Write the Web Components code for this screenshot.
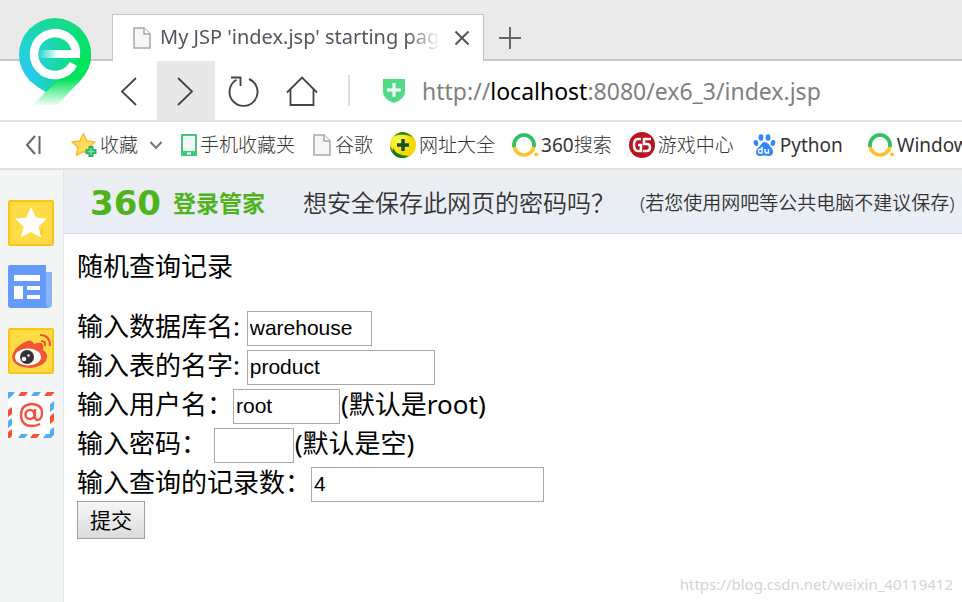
<!DOCTYPE html>
<html lang="zh-CN">
<head>
<meta charset="utf-8">
<meta name="viewport" content="width=device-width, initial-scale=1">
<title>My JSP 'index.jsp' starting page</title>
<style>
    body {
        margin: 0;
        background: #fff;
        font-family: "Noto Sans", "Noto Sans CJK SC", sans-serif;
    }
</style>
</head>
<body>
<browser-window></browser-window>

<script>
// inline svg icons, looked up by name
const icons = {
    file: `<svg width="20" height="22" viewBox="0 0 20 22" fill="#f6f6f6" stroke="#a8a8a8" stroke-width="1.500">
        <path d="M2 1h10l6 6v14H2z"/><path d="M12 1v6h6" fill="#fff"/></svg>`,
    close: `<svg width="16" height="16" viewBox="0 0 16 16" stroke="#555" stroke-width="2"><path d="M1.500 1.500l13 13M14.500 1.500l-13 13"/></svg>`,
    plus: `<svg width="22" height="22" viewBox="0 0 22 22" stroke="#666" stroke-width="2"><path d="M11 0v22M0 11h22"/></svg>`,
    back: `<svg width="30" height="30" viewBox="0 0 30 30" fill="none" stroke="#444" stroke-width="1.800"><path d="M23 2L9 15.500 23 29"/></svg>`,
    forward: `<svg width="30" height="30" viewBox="0 0 30 30" fill="none" stroke="#444" stroke-width="1.800"><path d="M7 2l14 13.500L7 29"/></svg>`,
    reload: `<svg width="32" height="32" viewBox="0 0 32 32" fill="none" stroke="#444" stroke-width="1.900">
        <path d="M21 4a14 14 0 1 1-12.500 .8"/><path d="M3 2.500h9.500v8.500"/></svg>`,
    home: `<svg width="32" height="32" viewBox="0 0 32 32" fill="none" stroke="#444" stroke-width="1.800">
        <path d="M1 17.500L16 2.500l15 15"/><path d="M4.500 14.500v15.500h23V14.500"/></svg>`,
    shield: `<svg width="24" height="26" viewBox="0 0 24 26"><path d="M1 1h22v13q0 7-11 11Q1 21 1 14z" fill="#50dc85"/>
        <path d="M12 5v14M5 12h14" stroke="#fff" stroke-width="3"/></svg>`,
    collapse: `<svg width="16" height="20" viewBox="0 0 16 20" fill="none" stroke="#666" stroke-width="2"><path d="M10 1L2 10l8 9M14.500 1v18"/></svg>`,
    star: `<svg width="26" height="26" viewBox="0 0 26 26">
        <path d="M12.500 1.500l3.400 7.400 8 1-6 5.500 1.600 8-7-3.900-7.100 3.900 1.600-8-6-5.500 8.100-1z" fill="#ffdc5c" stroke="#f8bd3c" stroke-width="1.500" stroke-linejoin="round"/>
        <path d="M20 14v11M14.500 19.500h11" stroke="#28b463" stroke-width="5"/>
        <path d="M20 16v7M16.500 19.500h7" stroke="#7be0a3" stroke-width="1.500"/></svg>`,
    chevron: `<svg width="14" height="10" viewBox="0 0 14 10" fill="none" stroke="#777" stroke-width="2"><path d="M1.500 2L7 8l5.500-6"/></svg>`,
    phone: `<svg width="16" height="22" viewBox="0 0 16 22"><rect width="16" height="22" rx="1" fill="#3fc877"/>
        <path d="M2 2h12v15H2z" fill="#f3faf6"/><path d="M6 19.500h4" stroke="#fff" stroke-width="2"/></svg>`,
    guide: `<svg width="26" height="26" viewBox="0 0 26 26"><defs><radialGradient id="y" cx=".35" cy=".35"><stop stop-color="#ffff58"/><stop offset="1" stop-color="#f5d800"/></radialGradient></defs>
        <circle cx="13" cy="13" r="13" fill="url(#y)"/>
        <path d="M4 4Q13-4 23 5q-9-4-19-1zM0 14q4 9 19 10-8 5-15-1-4-4-4-9z" fill="#35901b"/>
        <path d="M9 1q10 0 15 8Q20 3 13 0zM3 16q4 8 14 9-9 2-14-4z" fill="#157718"/>
        <path d="M13 7v12M7 13h12" stroke="#165018" stroke-width="3.500"/></svg>`,
    ring: `<svg width="26" height="26" viewBox="0 0 26 26" fill="none" stroke-width="3.600">
        <circle cx="12" cy="13" r="10" stroke="#fdc12c"/><path d="M2.200 15a10 10 0 1 1 19.600 0" stroke="#24c46a"/>
        <circle cx="24" cy="22.500" r="2" fill="#fdc12c"/></svg>`,
    game: `<svg width="26" height="26" viewBox="0 0 26 26"><circle cx="13" cy="13" r="13" fill="#bd1320"/>
        <path d="M12 7H9q-4 0-4 6t4 6h3v-6H9M22 7h-7v5h3q3 0 3 3.500T17.500 19H14" fill="none" stroke="#fff" stroke-width="2.500"/></svg>`,
    paw: `<svg width="26" height="26" viewBox="0 0 26 26" fill="#3385ff">
        <ellipse cx="5" cy="11" rx="2.300" ry="3" transform="rotate(-15 5 11)"/><ellipse cx="10" cy="5.500" rx="2.400" ry="3.300"/>
        <ellipse cx="17" cy="5.500" rx="2.400" ry="3.300"/><ellipse cx="22" cy="11" rx="2.300" ry="3" transform="rotate(15 22 11)"/>
        <path d="M13.500 10q3 0 5.500 4 4 4 3 7-1 3-4 3-4-1-9 0-4 0-4-4 0-3 4-6 2-4 4.500-4z"/>
        <path d="M11 15v6H9q-1.500 0-1.500-2T9 17.200h2M14 17v2.500q0 1.500 2 1.500h1.500v-4" fill="none" stroke="#fff" stroke-width="1.400"/></svg>`,
    favorites: `<svg width="46" height="46" viewBox="0 0 46 46"><rect x="1" y="1" width="44" height="44" rx="1" fill="#ffdb45" stroke="#fdc414" stroke-width="2"/>
        <path d="M31 36l4-2-1-7 3-8z" fill="#f5c52c"/>
        <path d="M23 8l4.500 10 10.500 1-8 7.500 2.500 10L23 31.500 13.500 36.500l2.500-10L8 19l10.500-1z" fill="#fff" stroke="#fff" stroke-linejoin="round"/></svg>`,
    news: `<svg width="46" height="46" viewBox="0 0 46 46"><path d="M34 8h10v32q0 4-4 4H30z" fill="#86b5fb"/>
        <path d="M0 3q0-2 2-2h36v39q0 4 3 4H3q-3 0-3-3z" fill="#659afa"/>
        <path d="M6 11h26v6H6zM6 22h9v13H6zM19 22h13v4H19zM19 31h13v4H19z" fill="#fff"/></svg>`,
    weibo: `<svg width="46" height="46" viewBox="0 0 46 46"><rect x="1" y="1" width="44" height="44" rx="1" fill="#ffdc43" stroke="#fdc414" stroke-width="2"/>
        <path d="M17 14q6-4 9 2 8-3 9 1 1 2 0 5 4 2 4 6 0 10-17 12Q5 39 4 29q1-9 13-15z" fill="#f05537"/>
        <ellipse cx="20" cy="29" rx="13" ry="8.500" fill="#fff"/><circle cx="19" cy="29" r="7" fill="#333"/>
        <circle cx="16" cy="31" r="2.300" fill="#fff"/><circle cx="20.500" cy="27.500" r="1.200" fill="#fff"/>
        <path d="M33 13q5 0 4 5M32 7q10 0 10 11" fill="none" stroke="#f05537" stroke-width="2.200"/></svg>`,
    mail: `<svg width="46" height="46" viewBox="0 0 46 46"><rect width="46" height="46" fill="#fff"/>
        <g fill="#f4523c"><path d="M13 0h7l-3 4h-7zM39 0h7v1l-3 3h-7zM0 18l4-3v7l-4 3zM0 40l4-3v7l-2 2H0zM25 42h7l-3 4h-7zM42 24l4-3v8l-4 3z"/></g>
        <g fill="#54aef5"><path d="M0 0h7L4 4 0 7zM26 0h7l-3 4h-7zM0 29l4-3v7l-4 3zM13 42h7l-3 4h-7zM38 42h4v-4l4-3v8l-3 3h-8zM42 12l4-3v8l-4 3z"/></g>
        <circle cx="22" cy="22.500" r="4.500" fill="none" stroke="#f4523c" stroke-width="2.500"/>
        <path d="M27 17v8q0 3 3 3 4-1 4-7 0-9-11-9-10 1-10 11 0 11 11 11 4 0 8-2" fill="none" stroke="#f4523c" stroke-width="2.300"/></svg>`,
    logo: `<svg width="76" height="92" viewBox="0 0 76 92">
        <defs>
            <linearGradient id="drop" x1=".15" y1=".95" x2=".6" y2="0"><stop stop-color="#2bc6ff"/><stop offset=".45" stop-color="#22d3d0"/><stop offset="1" stop-color="#14dc88"/></linearGradient>
            <linearGradient id="side" gradientUnits="userSpaceOnUse" x1="30" y1="30" x2="66" y2="48"><stop stop-color="#02e45b" stop-opacity="0"/><stop offset="1" stop-color="#02e45b"/></linearGradient>
            <linearGradient id="tail" gradientUnits="userSpaceOnUse" x1="0" y1="62" x2="0" y2="90"><stop stop-color="#02e45b"/><stop offset="1" stop-color="#02e45b" stop-opacity="0"/></linearGradient>
            <linearGradient id="bar" gradientUnits="userSpaceOnUse" x1="20" y1="0" x2="40" y2="0"><stop stop-color="#fff" stop-opacity="0"/><stop offset="1" stop-color="#fff"/></linearGradient>
        </defs>
        <path d="M37 1a36.500 36.500 0 0 1 36 37q0 14-11 25H40L28 75Q19 70 12 64 1 52 1 38A36.500 36.500 0 0 1 37 1z" fill="url(#drop)"/>
        <path d="M37 1a36.500 36.500 0 0 1 36 37q0 14-11 25H40L28 75Q19 70 12 64 1 52 1 38A36.500 36.500 0 0 1 37 1z" fill="url(#side)"/>
        <path d="M62 40q11-9 11-2 0 14-11 26L39 88H15L40 62z" fill="url(#tail)"/>
        <path d="M55.500 47A21 21 0 1 1 58 37" fill="none" stroke="#fff" stroke-width="8.500"/>
        <path d="M20 33h42v8H20z" fill="url(#bar)"/></svg>`
};

// shared helper: open shadow root filled from a template
function attach(element, html) {
    const template = document.createElement('template');
    template.innerHTML = html;
    element.attachShadow({ mode: 'open' });
    element.shadowRoot.appendChild(template.content.cloneNode(true));
}

// <ui-icon name="...">
class UiIcon extends HTMLElement {
    constructor() {
        super();
        attach(this, `
            <style>
                :host { display: inline-flex; flex: none; }
                svg { display: block; }
            </style>
            ${icons[this.getAttribute('name')]}`);
    }
}
customElements.define('ui-icon', UiIcon);

// <icon-button label="..."> square toolbar button
class IconButton extends HTMLElement {
    constructor() {
        super();
        attach(this, `
            <style>
                :host { display: flex; flex: none; }
                button {
                    display: flex;
                    align-items: center;
                    justify-content: center;
                    width: var(--button-width, 58px);
                    border: 0;
                    padding: 0;
                    background: none;
                    cursor: pointer;
                }
                :host([active]) button, button:hover { background: #e8e8e8; }
            </style>
            <button type="button"><slot></slot></button>`);
        this.shadowRoot.querySelector('button').setAttribute('aria-label', this.getAttribute('label'));
    }
}
customElements.define('icon-button', IconButton);

// tab strip along the top
class TabStrip extends HTMLElement {
    constructor() {
        super();
        attach(this, `
            <style>
                :host {
                    display: flex;
                    align-items: flex-end;
                    height: 61px;
                    box-sizing: border-box;
                    padding-left: 112px;
                    background: linear-gradient(#c6c6c6, #c6c6c6) bottom / 100% 2px no-repeat #eaeaea;
                    --button-width: 28px;
                }
                .tab {
                    display: flex;
                    align-items: center;
                    gap: 8px;
                    width: 372px;
                    height: 47px;
                    box-sizing: border-box;
                    border: 1px solid #c6c6c6;
                    border-bottom: 0;
                    padding: 0 7px 0 19px;
                    background: #fff;
                }
                .title {
                    flex: 1;
                    overflow: hidden;
                    white-space: nowrap;
                    color: #555560;
                    font-size: 20px;
                    line-height: 28px;
                    padding-bottom: 2px;
                    -webkit-mask-image: linear-gradient(to right, #000 88%, transparent);
                    mask-image: linear-gradient(to right, #000 88%, transparent);
                }
                .new { height: 47px; padding-left: 12px; }
            </style>
            <div class="tab">
                <ui-icon name="file"></ui-icon>
                <span class="title">My JSP 'index.jsp' starting page</span>
                <icon-button label="关闭"><ui-icon name="close"></ui-icon></icon-button>
            </div>
            <icon-button class="new" label="新标签页"><ui-icon name="plus"></ui-icon></icon-button>`);
    }
}
customElements.define('tab-strip', TabStrip);

// navigation buttons and address
class AddressBar extends HTMLElement {
    constructor() {
        super();
        attach(this, `
            <style>
                :host {
                    display: flex;
                    height: 59px;
                    padding-left: 99px;
                    border-bottom: 2px solid #e0e0e0;
                    background: #fff;
                }
                .address {
                    flex: 1;
                    display: flex;
                    align-items: center;
                    gap: 16px;
                    margin: 14px 0 14px 17px;
                    border-left: 2px solid #ddd;
                    padding-left: 32px;
                }
                .url {
                    color: #808080;
                    font-size: 23px;
                    line-height: 32px;
                    white-space: nowrap;
                    outline: 0;
                }
                b { color: #000; font-weight: 400; }
            </style>
            <icon-button label="后退"><ui-icon name="back"></ui-icon></icon-button>
            <icon-button label="前进" active><ui-icon name="forward"></ui-icon></icon-button>
            <icon-button label="刷新"><ui-icon name="reload"></ui-icon></icon-button>
            <icon-button label="主页"><ui-icon name="home"></ui-icon></icon-button>
            <div class="address">
                <ui-icon name="shield"></ui-icon>
                <span class="url" role="textbox" aria-label="地址" contenteditable="true" spellcheck="false">http://<b>localhost</b>:8080/ex6_3/index.jsp</span>
            </div>`);
    }
}
customElements.define('address-bar', AddressBar);

// <bookmark-link icon="...">text</bookmark-link>
class BookmarkLink extends HTMLElement {
    constructor() {
        super();
        attach(this, `
            <style>
                :host { display: flex; flex: none; }
                a {
                    display: flex;
                    align-items: center;
                    gap: 3px;
                    color: #333;
                    text-decoration: none;
                    white-space: nowrap;
                }
            </style>
            <a href="#"><ui-icon name="${this.getAttribute('icon')}"></ui-icon><slot></slot></a>`);
    }
}
customElements.define('bookmark-link', BookmarkLink);

class BookmarkBar extends HTMLElement {
    constructor() {
        super();
        attach(this, `
            <style>
                :host {
                    display: flex;
                    align-items: center;
                    gap: 17px;
                    height: 46px;
                    padding-left: 25px;
                    border-bottom: 2px solid #e0e0e0;
                    background: #fff;
                    overflow: hidden;
                    font-size: 19px;
                    font-weight: 300;
                    line-height: 28px;
                    --button-width: 16px;
                }
                .folder { display: flex; gap: 10px; padding-left: 13px; }
                .latin { font-weight: 400; padding-right: 8px; }
                .digits { font-weight: 400; }
            </style>
            <icon-button label="收起"><ui-icon name="collapse"></ui-icon></icon-button>
            <div class="folder">
                <bookmark-link icon="star">收藏</bookmark-link>
                <icon-button label="更多收藏"><ui-icon name="chevron"></ui-icon></icon-button>
            </div>
            <bookmark-link icon="phone">手机收藏夹</bookmark-link>
            <bookmark-link icon="file">谷歌</bookmark-link>
            <bookmark-link icon="guide">网址大全</bookmark-link>
            <bookmark-link icon="ring"><span><span class="digits">360</span>搜索</span></bookmark-link>
            <bookmark-link icon="game">游戏中心</bookmark-link>
            <bookmark-link class="latin" icon="paw">Python</bookmark-link>
            <bookmark-link class="latin" icon="ring">Windows</bookmark-link>`);
    }
}
customElements.define('bookmark-bar', BookmarkBar);

class SideBar extends HTMLElement {
    constructor() {
        super();
        attach(this, `
            <style>
                :host {
                    display: flex;
                    flex-direction: column;
                    align-items: center;
                    gap: 18px;
                    flex: none;
                    width: 61px;
                    padding: 30px 2px 0 0;
                    border-right: 1px solid #e4e6e6;
                    background: #f4f6f6;
                    --button-width: 46px;
                }
            </style>
            <icon-button label="收藏夹"><ui-icon name="favorites"></ui-icon></icon-button>
            <icon-button label="新闻"><ui-icon name="news"></ui-icon></icon-button>
            <icon-button label="微博"><ui-icon name="weibo"></ui-icon></icon-button>
            <icon-button label="邮箱"><ui-icon name="mail"></ui-icon></icon-button>`);
    }
}
customElements.define('side-bar', SideBar);

// password manager notice
class LoginBanner extends HTMLElement {
    constructor() {
        super();
        attach(this, `
            <style>
                :host {
                    display: flex;
                    align-items: center;
                    height: 61px;
                    padding: 2px 0 0 26px;
                    border-bottom: 1px solid #d4dcea;
                    background: linear-gradient(#ebeff2, #e9edf6);
                    color: #333;
                    white-space: nowrap;
                    overflow: hidden;
                    line-height: 32px;
                }
                .brand {
                    display: flex;
                    align-items: center;
                    gap: 8px;
                    width: 213px;
                    flex: none;
                    color: #50b31c;
                    font-size: 23px;
                    font-weight: 700;
                }
                .number { width: 75px; font-family: "DejaVu Sans", sans-serif; font-size: 34px; }
                .question { width: 337px; flex: none; font-size: 24px; font-weight: 350; }
                .hint { font-size: 19px; font-weight: 350; }
            </style>
            <div class="brand"><span class="number">360</span><span>登录管家</span></div>
            <span class="question">想安全保存此网页的密码吗？</span>
            <span class="hint">(若您使用网吧等公共电脑不建议保存)</span>`);
    }
}
customElements.define('login-banner', LoginBanner);

// <form-field label value width>note</form-field>
class FormField extends HTMLElement {
    constructor() {
        super();
        attach(this, `
            <style>
                :host { display: flex; align-items: center; height: 35px; white-space: pre; }
                label, .note { padding-bottom: 4px; }
                .note { padding-left: 1px; }
                input {
                    box-sizing: border-box;
                    height: 35px;
                    border: 1px solid #a9a9a9;
                    border-radius: 0;
                    padding: 0 2px 2px;
                    background: #fff;
                    color: #000;
                    font: 21px "Liberation Sans", sans-serif;
                }
            </style>
            <label for="field"></label><input id="field"><span class="note"><slot></slot></span>`);
        const input = this.shadowRoot.querySelector('input');
        this.shadowRoot.querySelector('label').textContent = this.getAttribute('label');
        input.type = this.getAttribute('type') || 'text';
        input.value = this.getAttribute('value') || '';
        input.style.width = this.getAttribute('width') + 'px';
    }
}
customElements.define('form-field', FormField);

class QueryPage extends HTMLElement {
    constructor() {
        super();
        attach(this, `
            <style>
                :host {
                    display: block;
                    padding: 15px 13px;
                    color: #000;
                    font-size: 26px;
                    line-height: 35px;
                }
                p { margin: 0 0 27px; }
                form { display: flex; flex-direction: column; gap: 4px; }
                button {
                    align-self: flex-start;
                    height: 38px;
                    margin-top: -5px;
                    border: 1px solid #a0a0a0;
                    padding: 0 12px 2px;
                    background: linear-gradient(#f6f6f6, #dcdcdc);
                    color: #000;
                    font: 21px "Noto Sans CJK SC", sans-serif;
                    line-height: 34px;
                }
            </style>
            <p>随机查询记录</p>
            <form>
                <form-field label="输入数据库名: " value="warehouse" width="125"></form-field>
                <form-field label="输入表的名字: " value="product" width="188"></form-field>
                <form-field label="输入用户名：" value="root" width="107">(默认是root)</form-field>
                <form-field label="输入密码： " type="password" width="80">(默认是空)</form-field>
                <form-field label="输入查询的记录数：" value="4" width="233"></form-field>
                <button type="submit">提交</button>
            </form>`);
        // stay on the page when the form is sent
        this.shadowRoot.querySelector('form').addEventListener('submit', (e) => e.preventDefault());
    }
}
customElements.define('query-page', QueryPage);

class BrowserWindow extends HTMLElement {
    constructor() {
        super();
        attach(this, `
            <style>
                :host {
                    position: relative;
                    display: flex;
                    flex-direction: column;
                    min-height: 100vh;
                    overflow: hidden;
                }
                .logo { position: absolute; left: 18px; top: 17px; }
                .body { flex: 1; display: flex; }
                main { flex: 1; min-width: 0; }
                .watermark {
                    position: absolute;
                    right: 9px;
                    bottom: 6px;
                    color: #d4d4d4;
                    font-size: 15px;
                    line-height: 24px;
                }
            </style>
            <tab-strip></tab-strip>
            <address-bar></address-bar>
            <bookmark-bar></bookmark-bar>
            <div class="body">
                <side-bar></side-bar>
                <main>
                    <login-banner></login-banner>
                    <query-page></query-page>
                </main>
            </div>
            <ui-icon class="logo" name="logo"></ui-icon>
            <span class="watermark">https://blog.csdn.net/weixin_40119412</span>`);
    }
}
customElements.define('browser-window', BrowserWindow);
</script>
</body>
</html>
